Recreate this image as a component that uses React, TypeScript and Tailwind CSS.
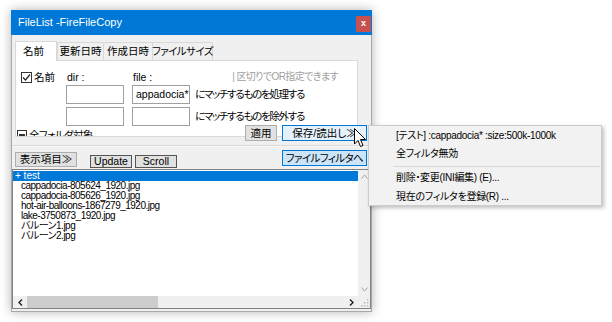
import React from 'react';

const ui = { fontFamily: '"Liberation Sans", "Noto Sans CJK JP", sans-serif' };

const files = [
  'cappadocia-805624_1920.jpg',
  'cappadocia-805626_1920.jpg',
  'hot-air-balloons-1867279_1920.jpg',
  'lake-3750873_1920.jpg',
  'バルーン1.jpg',
  'バルーン2.jpg',
];

const CheckBox = () => (
  <div className="w-[11px] h-[11px] border border-[#333] bg-white flex items-center justify-center">
    <svg width="9" height="9" viewBox="0 0 9 9">
      <path d="M1 4.5 L3.5 7 L8 1.5" fill="none" stroke="#222" strokeWidth="1.2" />
    </svg>
  </div>
);

const Cursor = () => (
  <svg width="13" height="20" viewBox="0 0 13 20">
    <path d="M0.5 0.5 L0.5 16 L4 12.5 L6.5 18.5 L9 17.5 L6.5 11.5 L11.5 11.5 Z" fill="#fff" stroke="#000" strokeWidth="1" />
  </svg>
);

const App: React.FC = () => {
  return (
    <div className="relative w-[612px] h-[322px] bg-white overflow-hidden text-[#000] [font-feature-settings:'palt']" style={ui}>
      <div className="pt-[10px] pl-[11px]">
        <div className="w-[361px] h-[302px] flex flex-col bg-[#f0f0f0] shadow-[0_0_10px_rgba(0,0,0,0.3)]">
          {/* title bar */}
          <div className="h-[25px] bg-[#0078d7] flex items-center justify-between pl-[7px] pr-[1px]">
            <span className="text-[11px] text-white leading-none">FileList -FireFileCopy</span>
            <div className="w-[15px] h-[16px] bg-[#c75050] flex items-center justify-center text-white text-[9px] font-bold leading-none mt-[2px]">x</div>
          </div>

          <div className="flex-1 flex flex-col border-x border-b border-[#a8a8a8]">
            {/* tabs */}
            <div className="flex items-end h-[20px] mt-[5px] pl-[3px] text-[10.5px] leading-none whitespace-nowrap">
              <div className="h-[20px] w-[42px] bg-white border border-b-0 border-[#d9d9d9] flex items-center pl-[7px] relative z-10 -mb-[1px]">名前</div>
              <div className="h-[18px] w-[47px] border border-b-0 border-[#d9d9d9] flex items-center justify-center">更新日時</div>
              <div className="h-[18px] w-[49px] border border-b-0 border-l-0 border-[#d9d9d9] flex items-center justify-center">作成日時</div>
              <div className="h-[18px] w-[60px] border border-b-0 border-l-0 border-[#d9d9d9] flex items-center justify-center tracking-[-0.6px]">ファイルサイズ</div>
            </div>

            {/* tab panel */}
            <div className="ml-[3px] w-[343px] h-[77px] bg-white border border-[#d9d9d9] overflow-hidden text-[10.5px] leading-none">
              <div className="flex items-center h-[14px] mt-[9px]">
                <div className="w-[50px] flex items-center gap-[2px] pl-[5px]">
                  <CheckBox />
                  <span>名前</span>
                </div>
                <div className="w-[66px] pl-[1px]">dir :</div>
                <div className="w-[58px] pl-[1px]">file :</div>
                <div className="flex-1 text-right pr-[19px] text-[#a0a0a0] text-[10px] tracking-[-0.6px] whitespace-nowrap">| 区切りでOR指定できます</div>
              </div>
              <div className="flex items-center mt-[1px] pl-[50px]">
                <div className="w-[58px] h-[19px] border border-[#a0a0a0] bg-white" />
                <div className="w-[58px] h-[19px] border border-[#a0a0a0] bg-white ml-[8px] flex items-center pl-[3px] overflow-hidden whitespace-nowrap">appadocia*</div>
                <span className="ml-[5px] text-[10.5px] tracking-[-1.3px] whitespace-nowrap">にマッチするものを処理する</span>
              </div>
              <div className="flex items-center mt-[3px] pl-[50px]">
                <div className="w-[58px] h-[19px] border border-[#a0a0a0] bg-white" />
                <div className="w-[58px] h-[19px] border border-[#a0a0a0] bg-white ml-[8px]" />
                <span className="ml-[5px] text-[10.5px] tracking-[-1.3px] whitespace-nowrap">にマッチするものを除外する</span>
              </div>
              <div className="flex items-center mt-[4px] pl-[1px] gap-[2px]">
                <div className="w-[10px] h-[10px] border border-[#333] flex items-center justify-center">
                  <div className="w-[6px] h-[2px] bg-[#333]" />
                </div>
                <span className="tracking-[-0.6px]">全フォルダ対象</span>
              </div>
            </div>

            {/* apply / save buttons */}
            <div className="flex relative z-10 -mt-[12px] pl-[233px] text-[10.5px] leading-none whitespace-nowrap">
              <div className="w-[32px] h-[16px] bg-[#e1e1e1] border border-[#adadad] flex items-center justify-center">適用</div>
              <div className="w-[85px] h-[16px] ml-[5px] bg-[#e5f1fb] border border-[#0078d7] flex items-center justify-center">保存/読出し≫</div>
            </div>

            <div className="mt-[4px] h-[2px] border-t border-[#d8d8d8] bg-white/60" />

            {/* second row */}
            <div className="flex items-start h-[18px] mt-[3px] pl-[3px] text-[10.5px] leading-none whitespace-nowrap">
              <div className="w-[62px] h-[15px] mt-[2px] bg-[#e1e1e1] border border-[#adadad] flex items-center justify-center">表示項目≫</div>
              <div className="w-[42px] h-[13px] mt-[5px] ml-[13px] bg-[#e1e1e1] border border-[#555] flex items-center justify-center">Update</div>
              <div className="w-[42px] h-[13px] mt-[5px] ml-[3px] bg-[#e1e1e1] border border-[#555] flex items-center justify-center">Scroll</div>
              <div className="w-[85px] h-[16px] ml-[105px] bg-[#cce4f7] border border-[#0078d7] flex items-center justify-center tracking-[-0.6px]">ファイルフィルタへ</div>
            </div>

            {/* list */}
            <div className="mt-[1px] w-[359px] flex-1 border border-[#828282] bg-white flex flex-col mb-[2px]">
              <div className="flex flex-1 min-h-0">
                <div className="flex-1 pt-[1px] text-[10px] leading-[10px]">
                  <div className="bg-[#0078d7] text-white h-[10px] pl-[2px] whitespace-nowrap">+ test</div>
                  {files.map((f) => (
                    <div key={f} className="h-[10px] pl-[8px] whitespace-nowrap tracking-[-0.5px]">{f}</div>
                  ))}
                </div>
                <div className="w-[12px] bg-[#f0f0f0] flex flex-col items-center justify-between py-[4px]">
                  <svg width="7" height="5" viewBox="0 0 7 5"><path d="M0.5 4.5 L3.5 1 L6.5 4.5" fill="none" stroke="#a3a3a3" strokeWidth="1" /></svg>
                  <svg width="7" height="5" viewBox="0 0 7 5"><path d="M0.5 0.5 L3.5 4 L6.5 0.5" fill="none" stroke="#a3a3a3" strokeWidth="1" /></svg>
                </div>
              </div>
              <div className="h-[12px] flex bg-[#f0f0f0] items-center">
                <div className="w-[14px] flex justify-center">
                  <svg width="5" height="7" viewBox="0 0 5 7"><path d="M4 0.5 L1 3.5 L4 6.5" fill="none" stroke="#222" strokeWidth="1.4" /></svg>
                </div>
                <div className="w-[131px] h-[12px] bg-[#cdcdcd]" />
                <div className="flex-1" />
                <div className="w-[14px] flex justify-center">
                  <svg width="5" height="7" viewBox="0 0 5 7"><path d="M1 0.5 L4 3.5 L1 6.5" fill="none" stroke="#222" strokeWidth="1.4" /></svg>
                </div>
                <div className="w-[12px] h-[12px] flex items-end justify-end p-[1px]">
                  <svg width="8" height="8" viewBox="0 0 8 8">
                    <rect x="6" y="0" width="1.5" height="1.5" fill="#bbb" />
                    <rect x="3" y="3" width="1.5" height="1.5" fill="#bbb" />
                    <rect x="6" y="3" width="1.5" height="1.5" fill="#bbb" />
                    <rect x="0" y="6" width="1.5" height="1.5" fill="#bbb" />
                    <rect x="3" y="6" width="1.5" height="1.5" fill="#bbb" />
                    <rect x="6" y="6" width="1.5" height="1.5" fill="#bbb" />
                  </svg>
                </div>
              </div>
            </div>
          </div>
        </div>
      </div>

      {/* context menu */}
      <div className="absolute left-[368px] top-[125px] w-[234px] h-[81px] bg-[#f2f2f2] border border-[#cccccc] shadow-[2px_2px_4px_rgba(0,0,0,0.25)] text-[10px] tracking-[-0.3px] leading-none pt-[1px] z-20 whitespace-nowrap">
        <div className="h-[18px] flex items-center pl-[27px]">[テスト] :cappadocia* :size:500k-1000k</div>
        <div className="h-[18px] flex items-center pl-[27px]">全フィルタ無効</div>
        <div className="h-[6px] flex items-center pl-[24px] pr-[1px]"><div className="flex-1 h-px bg-[#d7d7d7]" /></div>
        <div className="h-[18px] flex items-center pl-[27px]">削除・変更(INI編集) (E)...</div>
        <div className="h-[19px] flex items-center pl-[27px]">現在のフィルタを登録(R) ...</div>
      </div>

      <div className="absolute left-[354px] top-[128px] z-30">
        <Cursor />
      </div>
    </div>
  );
};

export default App;
